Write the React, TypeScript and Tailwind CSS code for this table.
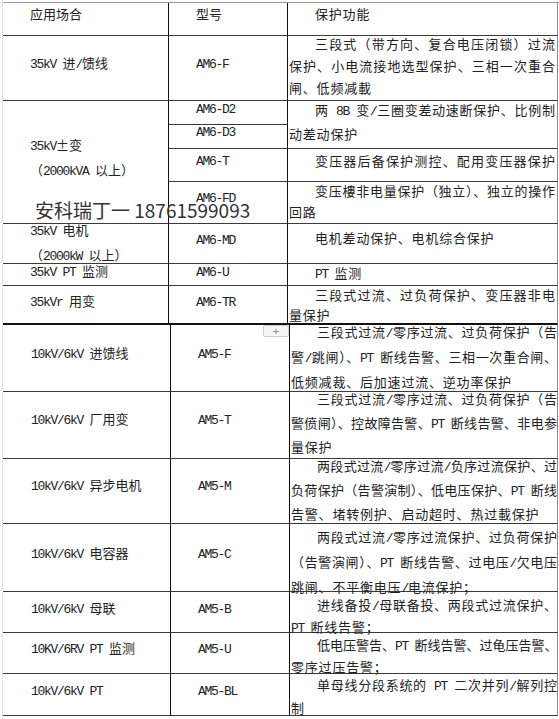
import React from 'react';

type Line = { s: string; i?: boolean; j?: boolean };
type Para = { lines: Line[]; cls: string };
type Row = { c1: string; c1Cls: string; c2: string; c2Cls: string; c3: Para };

// split a string into ascii runs (mono, narrow) and cjk runs
const Txt: React.FC<{ s: string; cjk?: string }> = ({ s, cjk = '' }) => (
  <span>
    {s
      .split(/([\x20-\x7e]+)/)
      .filter(Boolean)
      .map((p, k) =>
        /^[\x20-\x7e]+$/.test(p) ? (
          <span key={k} className="font-['Liberation_Mono',monospace] tracking-[-1.3px] whitespace-pre">
            {p}
          </span>
        ) : (
          <span key={k} className={cjk}>
            {p}
          </span>
        )
      )}
  </span>
);

const ParaCell: React.FC<{ p: Para }> = ({ p }) => (
  <div className={p.cls}>
    {p.lines.map((l, k) => (
      <div
        key={k}
        className={`whitespace-nowrap ${l.i ? 'indent-[26px]' : ''} ${
          l.j ? 'text-justify [text-align-last:justify]' : ''
        }`}
      >
        <Txt s={l.s} cjk={l.j ? '' : 'tracking-[0.8px]'} />
      </div>
    ))}
  </div>
);

const TOP_C3: Para[] = [
  { lines: [{ s: '保护功能', i: true }], cls: 'leading-[22px]' },
  {
    lines: [
      { s: '三段式（带方向、复合电压闭锁）过流', i: true, j: true },
      { s: '保护、小电流接地选型保护、三相一次重合', j: true },
      { s: '闸、低频减載' },
    ],
    cls: 'leading-[22px] -mt-[3px]',
  },
  {
    lines: [{ s: '两 8B 变/三圈变差动速断保护、比例制', i: true, j: true }, { s: '动差动保护' }],
    cls: 'leading-[22px] -mt-[2px]',
  },
  { lines: [{ s: '变压器后备保护测控、配用变压器保护', i: true, j: true }], cls: 'leading-[22px] pt-[1px]' },
  {
    lines: [{ s: '变压樓非电量保护（独立）、独立的操作', i: true, j: true }, { s: '回路' }],
    cls: 'leading-[21px] -mt-[2px]',
  },
  { lines: [{ s: '电机差动保护、电机综合保护', i: true }], cls: 'leading-[22px] pt-[3px]' },
  { lines: [{ s: 'PT 监测', i: true }], cls: 'leading-[17px]' },
  {
    lines: [{ s: '三段式过流、过负荷保护、变压器非电', i: true, j: true }, { s: '量保护' }],
    cls: 'leading-[20px] -mt-[1px]',
  },
];

const BOTTOM: Row[] = [
  {
    c1: '10kV/6kV 进馈线',
    c1Cls: 'pb-[8px]',
    c2: 'AM5-F',
    c2Cls: 'pb-[8px]',
    c3: {
      lines: [
        { s: '三段式过流/零序过流、过负荷保护（告', i: true, j: true },
        { s: '警/跳闸）、PT 断线告警、三相一次重合闸、', j: true },
        { s: '低频减裁、后加速过流、逆功率保护' },
      ],
      cls: 'leading-[23px] -mt-[5px]',
    },
  },
  {
    c1: '10kV/6kV 厂用变',
    c1Cls: 'pb-[11px]',
    c2: 'AM5-T',
    c2Cls: 'pb-[11px]',
    c3: {
      lines: [
        { s: '三段式过流/零序过流、过负荷保护（告', i: true, j: true },
        { s: '警偾闸）、控故障告警、PT 断线告警、非电参', j: true },
        { s: '量保护' },
      ],
      cls: 'leading-[22px] -mt-[4px]',
    },
  },
  {
    c1: '10kV/6kV 异步电机',
    c1Cls: 'pb-[10px]',
    c2: 'AM5-M',
    c2Cls: 'pb-[10px]',
    c3: {
      lines: [
        { s: '两段式过流/零序过流/负序过流保护、过', i: true, j: true },
        { s: '负荷保护（告警演制）、低电压保护、PT 断线', j: true },
        { s: '告警、堵转例护、启动超时、热过載保护' },
      ],
      cls: 'leading-[22px] -mt-[4px]',
    },
  },
  {
    c1: '10kV/6kV 电容器',
    c1Cls: 'pb-[7px]',
    c2: 'AM5-C',
    c2Cls: 'pb-[7px]',
    c3: {
      lines: [
        { s: '两段式过流/零序过流保护、过负荷保护', i: true, j: true },
        { s: '（告警演闸）、PT 断线告警、过电压/欠电压', j: true },
        { s: '跳闸、不平衡电压/电流保护；' },
      ],
      cls: 'leading-[23px] pt-[1px]',
    },
  },
  {
    c1: '10kV/6kV 母联',
    c1Cls: 'pb-[6px]',
    c2: 'AM5-B',
    c2Cls: 'pb-[6px]',
    c3: {
      lines: [{ s: '进线备投/母联备投、两段式过流保护、', i: true, j: true }, { s: 'PT 断线告警；' }],
      cls: 'leading-[20px] pt-[3px]',
    },
  },
  {
    c1: '10KV/6RV PT 监测',
    c1Cls: 'pb-[8px]',
    c2: 'AM5-U',
    c2Cls: 'pb-[8px]',
    c3: {
      lines: [{ s: '低电压警告、PT 断线告警、过龟压告警、', i: true, j: true }, { s: '零序过压告警；' }],
      cls: 'leading-[20px] pt-[2px]',
    },
  },
  {
    c1: '10kV/6kV PT',
    c1Cls: 'pb-[7px]',
    c2: 'AM5-BL',
    c2Cls: 'pb-[7px]',
    c3: {
      lines: [{ s: '单母线分段系统的 PT 二次并列/解列控', i: true, j: true }, { s: '制' }],
      cls: 'leading-[21px]',
    },
  },
];

const line = 'border-b border-r border-b-[#3a3a3a] border-r-[#111]';
const lastCol = 'border-b border-r border-b-[#3a3a3a] border-r-[#8a8a8a]';

const App: React.FC = () => {
  return (
    <div className="relative w-[559px] h-[719px] bg-white overflow-hidden text-[13px] text-[#222] font-['Noto_Sans_CJK_SC',sans-serif]">
      <div className="ml-[2px] h-full border-l border-dotted border-[#c9c9c9] pt-[2px]">
        {/* 35kV table */}
        <div className="grid grid-cols-[166px_119px_270px] grid-rows-[33px_65px_24px_24px_33px_42px_40px_22px_39px] border-t border-[#9a9a9a]">
          {/* header */}
          <div className={`${line} pl-[27px] leading-[22px]`}>应用场合</div>
          <div className={`${line} pl-[27px] leading-[22px]`}>型号</div>
          <div className={`${lastCol} pl-[1px] pr-[2px]`}>
            <ParaCell p={TOP_C3[0]} />
          </div>

          {/* 35kV 进/馈线 */}
          <div className={`${line} pl-[27px] flex items-center pb-[8px]`}>
            <Txt s="35kV 进/馈线" />
          </div>
          <div className={`${line} pl-[27px] flex items-center pb-[8px]`}>
            <Txt s="AM6-F" />
          </div>
          <div className={`${lastCol} pl-[1px] pr-[2px]`}>
            <ParaCell p={TOP_C3[1]} />
          </div>

          {/* 主变 */}
          <div className={`${line} row-span-4 pl-[27px] flex flex-col justify-center leading-[23px] pb-[9px]`}>
            <div>
              <Txt s="35kV±变" />
            </div>
            <div>
              <Txt s="（2000kVA 以上）" />
            </div>
          </div>
          <div className={`${line} pl-[27px] flex items-center pb-[7px]`}>
            <Txt s="AM6-D2" />
          </div>
          <div className={`${lastCol} row-span-2 pl-[1px] pr-[2px]`}>
            <ParaCell p={TOP_C3[2]} />
          </div>
          <div className={`${line} pl-[27px] flex items-center pb-[10px]`}>
            <Txt s="AM6-D3" />
          </div>
          <div className={`${line} pl-[27px] flex items-center pb-[8px]`}>
            <Txt s="AM6-T" />
          </div>
          <div className={`${lastCol} pl-[1px] pr-[2px]`}>
            <ParaCell p={TOP_C3[3]} />
          </div>
          <div className={`${line} pl-[27px] flex items-center pb-[9px]`}>
            <Txt s="AM6-FD" />
          </div>
          <div className={`${lastCol} pl-[1px] pr-[2px]`}>
            <ParaCell p={TOP_C3[4]} />
          </div>

          {/* 电机 */}
          <div className={`${line} pl-[27px] flex flex-col justify-center leading-[23px] pb-[2px]`}>
            <div>
              <Txt s="35kV 电机" />
            </div>
            <div>
              <Txt s="（2000kW 以上）" />
            </div>
          </div>
          <div className={`${line} pl-[27px] flex items-center pb-[7px]`}>
            <Txt s="AM6-MD" />
          </div>
          <div className={`${lastCol} pl-[1px] pr-[2px]`}>
            <ParaCell p={TOP_C3[5]} />
          </div>

          {/* PT 监测 */}
          <div className={`${line} pl-[27px] flex items-center pb-[6px]`}>
            <Txt s="35kV PT 监测" />
          </div>
          <div className={`${line} pl-[27px] flex items-center pb-[6px]`}>
            <Txt s="AM6-U" />
          </div>
          <div className={`${lastCol} pl-[1px] pr-[2px]`}>
            <ParaCell p={TOP_C3[6]} />
          </div>

          {/* 用变 */}
          <div className={`${line} border-b-2 border-b-[#111] pl-[27px] flex items-center pb-[6px]`}>
            <Txt s="35kVr 用变" />
          </div>
          <div className={`${line} border-b-2 border-b-[#111] pl-[27px] flex items-center pb-[6px]`}>
            <Txt s="AM6-TR" />
          </div>
          <div className={`${lastCol} border-b-2 border-b-[#111] pl-[1px] pr-[2px]`}>
            <ParaCell p={TOP_C3[7]} />
          </div>
        </div>

        {/* 10kV/6kV table */}
        <div className="grid grid-cols-[168px_119px_268px] grid-rows-[67px_67px_65px_68px_41px_41px_42px]">
          {BOTTOM.map((r, k) => (
            <React.Fragment key={k}>
              <div className={`${line} pl-[28px] flex items-center ${r.c1Cls}`}>
                <Txt s={r.c1} />
              </div>
              <div className={`${line} pl-[27px] flex items-center ${r.c2Cls}`}>
                <Txt s={r.c2} />
              </div>
              <div className={`${lastCol} pl-[1px]`}>
                <ParaCell p={r.c3} />
              </div>
            </React.Fragment>
          ))}
        </div>
      </div>

      {/* watermark */}
      <div className="absolute left-[35px] top-[198px] text-[19px] leading-[24px] text-[#333] whitespace-nowrap">
        安科瑞丁一 18761599093
      </div>

      {/* table handle */}
      <div className="absolute left-[263px] top-[325px] w-[26px] h-[12px] rounded-[2px] border border-[#cfcfcf] bg-[#f6f6f6] flex items-center justify-center text-[11px] leading-none text-[#8a8a8a] font-['Liberation_Sans',sans-serif]">
        +
      </div>
    </div>
  );
};

export default App;
